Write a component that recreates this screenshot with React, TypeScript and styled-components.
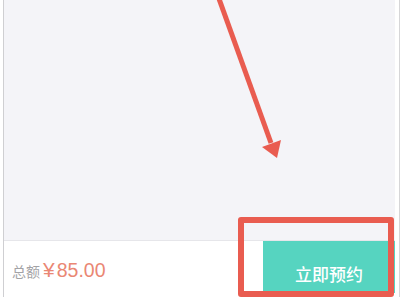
import styled, { createGlobalStyle } from 'styled-components';

const Global = createGlobalStyle`
    html, body {
        margin: 0;
        padding: 0;
        background: #fff;
    }
`;

const Page = styled.div`
    position: relative;
    width: 400px;
    height: 300px;
    overflow: hidden;
    background: #fff;
    padding-left: 3px;
    box-sizing: border-box;
`;

const Phone = styled.div`
    width: 397px;
    height: 297px;
    box-sizing: border-box;
    border-left: 1px solid #cfcfd2;
    border-right: 1px solid #d6d6d8;
    padding-right: 4px;
    display: flex;
    flex-direction: column;
`;

const Content = styled.div`
    height: 240px;
    background: #f4f4f8;
    border-bottom: 1px solid #e6e6ea;
`;

const Footer = styled.div`
    height: 54px;
    display: flex;
    align-items: stretch;
    justify-content: space-between;
    background: #fff;
`;

const Total = styled.div`
    display: flex;
    align-items: baseline;
    padding: 17px 0 0 8px;
    font-family: "Liberation Sans", "Noto Sans CJK SC", sans-serif;
`;

const Label = styled.span`
    font-size: 14px;
    color: #a3a3a6;
    margin-right: 3px;
`;

const Currency = styled.span`
    font-size: 21px;
    color: #ea8774;
    margin-right: 2px;
`;

const Price = styled.span`
    font-size: 19.5px;
    color: #ea8774;
`;

const BookButton = styled.button`
    width: 132px;
    border: none;
    margin: 0 0 2px;
    padding: 12px 0 0;
    background: #56d4c0;
    color: #fff;
    font-family: "Noto Sans CJK SC", sans-serif;
    font-size: 17px;
    font-weight: 500;
`;

const Highlight = styled.div`
    position: absolute;
    left: 238px;
    top: 217px;
    width: 156px;
    height: 80px;
    box-sizing: border-box;
    border: 6px solid #e95c50;
    border-radius: 3px;
`;

const Arrow = styled.svg`
    position: absolute;
    left: 0;
    top: 0;
`;

export default function App() {
    return (
        <>
            <Global />
            <Page>
                <Phone>
                    <Content />
                    <Footer>
                        <Total>
                            <Label>总额</Label>
                            <Currency>¥</Currency>
                            <Price>85.00</Price>
                        </Total>
                        <BookButton>立即预约</BookButton>
                    </Footer>
                </Phone>
                <Highlight />
                <Arrow width="400" height="300" viewBox="0 0 400 300">
                    <line x1="218" y1="-4" x2="271" y2="143" stroke="#e95c50" strokeWidth="5" />
                    <polygon points="262,147 281,140 277,158" fill="#e95c50" />
                </Arrow>
            </Page>
        </>
    );
}
